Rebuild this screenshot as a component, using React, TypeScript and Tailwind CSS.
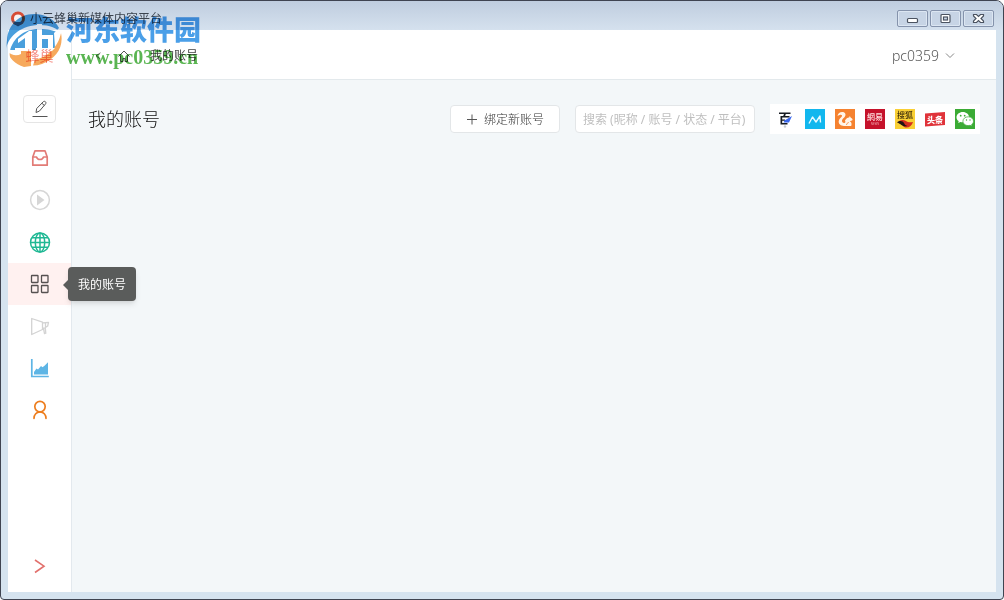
import React, { useState } from 'react';

interface IconProps {
  className?: string;
}

const EditIcon: React.FC<IconProps> = ({ className }) => (
  <svg viewBox="0 0 20 20" className={className} fill="none" stroke="currentColor" strokeWidth="1" aria-hidden="true">
    <path d="M2.5 17.500h15" strokeWidth="1.200" />
    <path d="M6 13.500l.7-4L13 3c.7-.8 1.700-.9 2.400-.3s.7 1.600 0 2.400l-6 7zM11.900 4.300l2.500 2.200" />
  </svg>
);

const InboxIcon: React.FC<IconProps> = ({ className }) => (
  <svg viewBox="0 0 20 20" className={className} fill="none" stroke="currentColor" strokeWidth="1.700" strokeLinejoin="round" aria-hidden="true">
    <path d="M2.800 9L5 2.800h10L17.200 9v8.200H2.800z" />
    <path d="M2.800 9h3.700c.5 1.700 1.800 2.500 3.500 2.500s3-.8 3.500-2.500h3.700" />
  </svg>
);

const PlayIcon: React.FC<IconProps> = ({ className }) => (
  <svg viewBox="0 0 22 22" className={className} aria-hidden="true">
    <circle cx="11" cy="11" r="9.400" fill="none" stroke="currentColor" strokeWidth="1.500" />
    <path d="M8 5.500v11l7.500-5.500z" fill="currentColor" />
  </svg>
);

const GlobeIcon: React.FC<IconProps> = ({ className }) => (
  <svg viewBox="0 0 22 22" className={className} fill="none" stroke="currentColor" strokeWidth="1.500" aria-hidden="true">
    <circle cx="11" cy="11.500" r="9.500" />
    <ellipse cx="11" cy="11.500" rx="4.700" ry="9.500" />
    <path d="M11 2v19M1.500 11.500h19M3 6.800h16M3 16.200h16" />
  </svg>
);

const GridIcon: React.FC<IconProps> = ({ className }) => (
  <svg viewBox="0 0 20 20" className={className} fill="none" stroke="currentColor" strokeWidth="1.300" aria-hidden="true">
    <rect x="1.500" y="1.500" width="6.500" height="7" rx=".5" />
    <rect x="11.500" y="1.500" width="6.500" height="7" rx=".5" />
    <rect x="1.500" y="11.500" width="6.500" height="7" rx=".5" />
    <rect x="11.500" y="11.500" width="6.500" height="7" rx=".5" />
  </svg>
);

const HornIcon: React.FC<IconProps> = ({ className }) => (
  <svg viewBox="0 0 20 20" className={className} fill="none" stroke="currentColor" strokeWidth="1.300" strokeLinejoin="round" aria-hidden="true">
    <path d="M1.700 2.500v16l10.800-5V6.200zM12.500 6.800l6-.5-.8 3.700-2.700 1.800-2.500.7M13.500 12.500l1 5 1.300-.3-.5-5.500M15.500 6.600v4.700" />
  </svg>
);

const ChartIcon: React.FC<IconProps> = ({ className }) => (
  <svg viewBox="0 0 20 20" className={className} aria-hidden="true">
    <path d="M1.800 1v17.500h17" fill="none" stroke="currentColor" strokeWidth="1.700" />
    <path d="M4 16.500V14l2.500-3.500 1.500 1L11 8l1.500 1.200 2-1.400L18 4.300v12.200z" fill="currentColor" />
  </svg>
);

const UserIcon: React.FC<IconProps> = ({ className }) => (
  <svg viewBox="0 0 20 20" className={className} fill="none" stroke="currentColor" strokeWidth="1.700" strokeLinecap="round" aria-hidden="true">
    <circle cx="10" cy="6.600" r="5.200" />
    <path d="M4 18.300c0-3.500 2.500-6.500 6-6.500s6 3 6 6.500" />
  </svg>
);

const ArrowIcon: React.FC<IconProps> = ({ className }) => (
  <svg viewBox="0 0 16 16" className={className} fill="none" stroke="currentColor" strokeWidth="1.600" aria-hidden="true">
    <path d="M3 2l9 6.200L3 14.500" />
  </svg>
);

const HomeIcon: React.FC<IconProps> = ({ className }) => (
  <svg viewBox="0 0 12 12" className={className} fill="none" stroke="currentColor" strokeWidth="1" aria-hidden="true">
    <path d="M.5 6.500L6 1l5.500 5.500M2.500 5.500v6h2.500V8.500h2v3h2.500v-6" />
  </svg>
);

const navItems = [
  { key: 'inbox', label: '素材', Icon: InboxIcon, size: 'size-5', color: 'text-[#e27b76]' },
  { key: 'video', label: '视频', Icon: PlayIcon, size: 'size-[22px]', color: 'text-[#d6d6d6]' },
  { key: 'web', label: '网站', Icon: GlobeIcon, size: 'size-[22px]', color: 'text-[#20b894]' },
  { key: 'accounts', label: '我的账号', Icon: GridIcon, size: 'size-5', color: 'text-[#555050]' },
  { key: 'promote', label: '推广', Icon: HornIcon, size: 'size-5', color: 'text-[#d3d3d3]' },
  { key: 'stats', label: '统计', Icon: ChartIcon, size: 'size-5', color: 'text-[#5eb5e5]' },
  { key: 'user', label: '用户', Icon: UserIcon, size: 'size-5', color: 'text-[#ed7d1e]' },
];

const platforms = [
  {
    name: '百家号',
    art: (
      <>
        <path d="M4 3.500h11.500V5H4zM9 5h1.800L10 7.500H8zM5.500 7h1.700v8.500H5.500zM7 7h7.500v1.500H7zM7 10.500h3v1.200H7zM6.500 14h6v1.500h-6z" fill="#171b22" />
        <path d="M9.500 11.500L17 7l-3 6.500H8.500z" fill="#3a68ee" />
        <circle cx="10" cy="17.500" r="1.200" fill="#c6cad4" />
      </>
    ),
  },
  {
    name: '一点号',
    art: (
      <>
        <path d="M0 0h20v20H0z" fill="#12b7ee" />
        <path d="M4 14.500L7.500 8l3.500 5 4-6 .5 6.500" fill="none" stroke="#e7faff" strokeWidth="1.400" strokeLinejoin="round" />
      </>
    ),
  },
  {
    name: '大鱼号',
    art: (
      <>
        <path d="M0 0h20v20H0z" fill="#f58230" />
        <path d="M2.500 7C3 4 5.500 2.500 8 3c2.500.6 3.200 3 1.800 4.800-1 1.300-2.600 2-2.800 3.800-.2 1.600 1 2.700 2.300 2.500 1.300-.3 1.400-1.600.6-2.300 1.300-2.600 2.800-3.400 4.300-3.300l.6-1.500 1 1.700c1.300.5 2 1.500 1.700 2.300-.5.800-2 .9-2.800 1.200 1.800.8 2.300 2.500 1.500 4.800H9c-3.300 0-5.500-2-5.300-4.700.2-2.300 2.200-3.300 3.100-4.700.7-1.200-.2-2.200-1.500-1.900-1 .2-1.800.8-2.800 1.300z" fill="#fff5e9" />
        <path d="M11.500 16c.3-1.500 1-2.300 2.300-2.500" fill="none" stroke="#f58230" strokeWidth=".8" />
      </>
    ),
  },
  {
    name: '网易号',
    art: (
      <>
        <path d="M0 0h20v20H0z" fill="#c5122b" />
        <text x="10" y="11" textAnchor="middle" fontSize="8" fontWeight="500" fill="#ffe2e2">網易</text>
        <text x="10" y="16" textAnchor="middle" fontSize="3" fill="#f0a0a8">NEWS</text>
      </>
    ),
  },
  {
    name: '搜狐号',
    art: (
      <>
        <path d="M0 0h20v20H0z" fill="#f9cf35" />
        <path d="M4 12c2.500-1.500 5-1.200 7 0 2.500 1.700 4 1.500 7 1-1 3.500-3.500 5.500-6.500 5.500-3.500 0-4-2.500-7.500-6.500z" fill="#d62d1f" />
        <path d="M2 13.500c2.500-2.500 6-1.500 7 .5.700 1.500 1.500 2.500 3.500 3-4.500 1.500-6-2-10.500-3.500z" fill="#211413" />
        <text x="10" y="8.500" textAnchor="middle" fontSize="8" fontWeight="500" fill="#40300b">搜狐</text>
      </>
    ),
  },
  {
    name: '头条号',
    art: (
      <>
        <path d="M0 4.500L20 3v13L0 17.500z" fill="#e0333a" />
        <text x="10" y="13.500" textAnchor="middle" fontSize="8" fontWeight="900" fill="#fff">头条</text>
      </>
    ),
  },
  {
    name: '微信公众号',
    art: (
      <>
        <path d="M0 0h20v20H0z" fill="#3bab35" />
        <path d="M7.800 3C4.300 3 1.500 5.300 1.500 8.200c0 1.600.8 3 2.200 3.900L3.200 14l2.200-1.100c.8.200 1.600.3 2.400.3 3.500 0 6.300-2.300 6.300-5S11.300 3 7.800 3z" fill="#fff" />
        <path d="M13.200 7.800c-3 0-5.300 2-5.300 4.400s2.300 4.400 5.300 4.400c.7 0 1.300-.1 1.900-.3l2 1-.5-1.700c1.200-.8 1.900-2 1.900-3.400 0-2.400-2.300-4.400-5.300-4.400z" fill="#fff" stroke="#3bab35" strokeWidth=".7" />
        <g fill="#3bab35">
          <circle cx="5.700" cy="6.700" r=".9" />
          <circle cx="9.700" cy="6.700" r=".9" />
          <circle cx="11.500" cy="11" r=".7" />
          <circle cx="15" cy="11" r=".7" />
        </g>
      </>
    ),
  },
];

const windowButtons = [
  { label: '最小化', art: <rect x="2.500" y="6.500" width="10" height="4" rx="1" fill="#fff" /> },
  {
    label: '最大化',
    art: (
      <>
        <rect x="3" y="2.500" width="9" height="8" rx="1" fill="#fff" />
        <rect x="5.500" y="5" width="4" height="3" fill="#c9d6e6" />
      </>
    ),
  },
  {
    label: '关闭',
    art: <path d="M2.500 2.500H5.500L7.500 4.500 9.500 2.500h3v1.500L10 6.500l2.500 2.500v1.500h-3l-2-2-2 2h-3V9L5 6.500 2.500 4z" fill="#fff" />,
  },
];

const TitleBar: React.FC = () => (
  <div className="flex h-[29px] items-center justify-between bg-linear-to-b from-[#bfcddf] to-[#d5e1ee] pr-[9px] pl-[9px]">
    <div className="flex items-center gap-1 pt-1.5">
      <svg viewBox="0 0 16 16" className="size-4" aria-hidden="true">
        <circle cx="8" cy="7.500" r="5.500" fill="#f7f5f5" stroke="#d64d35" strokeWidth="3" />
        <path d="M2 9.500c1.500 3 3.500 4.500 6 6 2.500-1.500 4.500-3 6-6-3 2-9 2-12 0z" fill="#46617c" />
      </svg>
      <span className="text-xs text-[#3b434e]">小云蜂巢新媒体内容平台</span>
    </div>
    <div className="flex gap-0.5 pt-1.5">
      {windowButtons.map(button => (
        <button
          key={button.label}
          type="button"
          aria-label={button.label}
          className="flex h-[17px] w-[31px] items-center justify-center rounded-xs border border-[#8593ac] bg-[#c7d4e5] shadow-[inset_0_0_0_1px_#dce6f2]"
        >
          <svg viewBox="0 0 15 13" className="h-[13px] w-[15px]" stroke="#4b5361" strokeWidth="1.200" aria-hidden="true">
            {button.art}
          </svg>
        </button>
      ))}
    </div>
  </div>
);

const Watermark: React.FC = () => (
  <div className="pointer-events-none absolute top-3 left-1 flex items-start gap-[3px] mix-blend-multiply select-none">
    <svg viewBox="0 0 58 56" className="h-14 w-[58px]" aria-hidden="true">
      <path d="M2 27C3 12 14 1 29 1c12 0 21 6 25 14l-5 5 1 15H38l-6 2H2c-.5-3-.5-7 0-10z" fill="#4a9fdc" />
      <path d="M56 20c3 14-5 26-19 31-3 1-6 1.500-9 1.500l2-6C41 45 53 35 56 20z" fill="#f6a95c" />
      <path d="M2 38c5 5 10 5 14 3v-5h10v17l-7 1C10 51 4 45 2 38z" fill="#f6a95c" />
      <path d="M1 36C4 22 17 12 35 12c9 0 18 3 21 9-7-4-14-5-22-5C19 16 8 25 5 38c-1 4 0 8 2 10-4-3-7-7-6-12z" fill="#fff" />
      <path d="M13 26l11-8h3v18h-7V25l-7 5z" fill="#fff" />
      <path d="M32 11h5v11h11v14h-5V26h-6v10h-5z" fill="#fff" />
      <path d="M10 35h17v3H10zM31 35h19l-3 3H31z" fill="#fff" />
    </svg>
    <div className="flex flex-col">
      <span className="text-[27px] leading-[34px] font-black whitespace-nowrap text-[#4a9fe8]">河东软件园</span>
      <span className="font-['Liberation_Serif',serif] text-xl leading-5 font-bold text-[#5ab552]">www.pc0359.cn</span>
    </div>
  </div>
);

const App: React.FC = () => {
  const [active, setActive] = useState('accounts');
  const [query, setQuery] = useState('');

  return (
    <div className="relative flex min-h-screen flex-col overflow-hidden rounded-t-lg rounded-b-sm border border-[#3f4451] bg-[#d5e3ef] font-['Noto_Sans','Noto_Sans_CJK_SC',sans-serif] text-xs text-[#555]">
      <TitleBar />

      <div className="mr-[7px] mb-[7px] ml-[7px] flex flex-1 bg-[#f3f7f9]">
        <aside className="flex w-16 shrink-0 flex-col items-center border-r border-[#e3e9ee] bg-white">
          <div className="flex h-[50px] items-center pt-0.5 text-sm text-[#f58f86]">蜂巢</div>
          <button type="button" aria-label="写文章" className="mt-[15px] mb-3.5 flex h-7 w-[33px] shrink-0 items-center justify-center rounded-sm border border-[#e5e5e5] text-[#555]">
            <EditIcon className="size-5" />
          </button>
          <nav className="flex w-full flex-col">
            {navItems.map(({ key, label, Icon, size, color }) => (
              <button
                key={key}
                type="button"
                aria-label={label}
                onClick={() => setActive(key)}
                className={`relative flex h-[42px] w-full items-center justify-center ${color} ${active === key ? 'bg-[#fff1f0]' : ''}`}
              >
                <Icon className={size} />
                {active === key && (
                  <span className="absolute left-[60px] z-10 flex h-[34px] items-center rounded-sm bg-[#5a5c5b] px-2.5 pt-0.5 whitespace-nowrap text-white shadow-md">
                    <span className="absolute -left-[5px] border-y-[5px] border-r-[5px] border-y-transparent border-r-[#5a5c5b]" />
                    {label}
                  </span>
                )}
              </button>
            ))}
          </nav>
          <button type="button" aria-label="展开菜单" className="mt-auto mb-[18px] text-[#e2706c]">
            <ArrowIcon className="size-4" />
          </button>
        </aside>

        <div className="flex min-w-0 flex-1 flex-col">
          <header className="flex h-[50px] items-center justify-between border-b border-[#e3e9ec] bg-white pt-0.5 pr-[41px] pl-[22px]">
            <div className="flex items-center">
              <button type="button" aria-label="返回" className="mr-4 rotate-180 text-[#555]">
                <ArrowIcon className="h-2.5 w-2" />
              </button>
              <a href="#home" aria-label="首页" className="mr-5 text-[#555]">
                <HomeIcon className="size-3" />
              </a>
              <span className="text-[#444]">我的账号</span>
            </div>
            <button type="button" className="flex items-center gap-1.5 text-sm font-light text-[#555]">
              pc0359
              <svg viewBox="0 0 10 8" className="h-2 w-2.5" fill="none" stroke="#888" aria-hidden="true">
                <path d="M1 1.500l4 4 4-4" />
              </svg>
            </button>
          </header>

          <main className="flex items-center px-4 pt-6">
            <h1 className="mr-auto text-lg font-light text-[#111]">我的账号</h1>
            <button type="button" className="mr-[15px] flex h-7 w-[110px] items-center justify-center gap-1.5 rounded-sm border border-[#e3e6e8] bg-white pt-0.5 font-light text-[#333]">
              <svg viewBox="0 0 12 12" className="size-3" stroke="#555" aria-hidden="true">
                <path d="M1 5.500h10M6 .5v10" />
              </svg>
              绑定新账号
            </button>
            <input
              type="text"
              value={query}
              onChange={e => setQuery(e.target.value)}
              aria-label="搜索账号"
              placeholder="搜索 (昵称 / 账号 / 状态 / 平台)"
              className="mr-[15px] h-7 w-[180px] rounded-sm border border-[#e3e6e8] bg-white px-[7px] placeholder:text-[#bfbfbf]"
            />
            <div className="flex h-[30px] items-center gap-2.5 bg-white px-[5px]">
              {platforms.map(platform => (
                <button key={platform.name} type="button" aria-label={platform.name}>
                  <svg viewBox="0 0 20 20" className="size-5">
                    {platform.art}
                  </svg>
                </button>
              ))}
            </div>
          </main>
        </div>
      </div>

      <Watermark />
    </div>
  );
};

export default App;
